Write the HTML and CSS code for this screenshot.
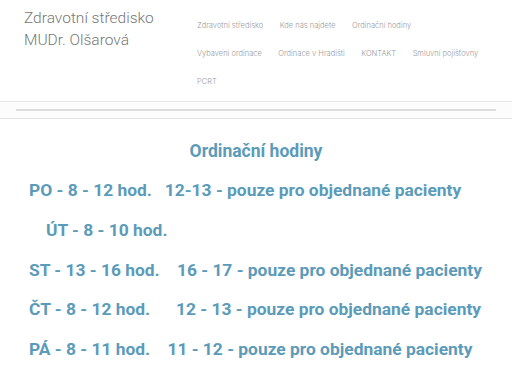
FILE: index.html
```html
<html>

<head>
	<title>Zdravotní středisko MUDr. Olšarová</title>
	<meta charset="utf-8">
	<meta name="viewport" content="width=device-width, initial-scale=1.0">

	<link rel="stylesheet" href="styles.css">
</head>

<body>
	<div class="header">
		<div class="logo">
			<p>Zdravotní středisko</p>
			<p>MUDr. Olšarová</p>
		</div>
		<ul class="menu">
			<li>Zdravotní středisko</li>
			<li>Kde nás najdete</li>
			<li>Ordinační hodiny</li>
			<li>Vybavení ordinace</li>
			<li>Ordinace v Hradišti</li>
			<li>KONTAKT</li>
			<li>Smluvní pojišťovny</li>
			<li>PCRT</li>
		</ul>
	</div>

	<div class="band">
		<div class="band-line"></div>
	</div>

	<div class="content">
		<h1>Ordinační hodiny</h1>
		<p>PO - 8 - 12 hod.&nbsp;&nbsp; 12-13 - pouze pro objednané pacienty</p>
		<p class="indent">ÚT - 8 - 10 hod.</p>
		<p>ST - 13 - 16 hod.&nbsp;&nbsp;&nbsp; 16 - 17 - pouze pro objednané pacienty</p>
		<p>ČT - 8 - 12 hod.&nbsp;&nbsp;&nbsp;&nbsp;&nbsp; 12 - 13 - pouze pro objednané pacienty</p>
		<p>PÁ - 8 - 11 hod.&nbsp;&nbsp;&nbsp; 11 - 12 - pouze pro objednané pacienty</p>
	</div>
</body>

</html>
```

FILE: styles.css
```css
body {
	margin: 0;
	background: #fff;
	font-family: Roboto, sans-serif;
}

.header {
	display: flex;
	height: 101px;
}

.logo {
	width: 173px;
	padding: 7px 0 0 24px;
	color: #777;
	font-size: 15.5px;
	font-weight: 300;
}

.logo p {
	margin: 0;
	line-height: 22px;
}

.menu {
	display: flex;
	flex-wrap: wrap;
	align-content: flex-start;
	list-style: none;
	margin: 0;
	padding: 12px 0 0 0;
	width: 290px;
	column-gap: 16.5px;
	font-family: Inter, sans-serif;
	font-size: 7.5px;
	font-weight: 300;
	color: #9a9a9a;
}

.menu li {
	line-height: 28px;
}

.band {
	height: 16px;
	border-top: 1px solid #e6e6e6;
	border-bottom: 1px solid #e6e6e6;
	background: #fcfcfc;
	padding: 0 16px;
	display: flex;
	align-items: center;
}

.band-line {
	flex: 1;
	height: 2px;
	background: #dedede;
}

.content {
	padding: 20px 0 0 29px;
	color: #5b9bb9;
	font-weight: 700;
}

.content h1 {
	margin: 0 0 8px -29px;
	text-align: center;
	font-size: 17.5px;
	line-height: 24px;
}

.content p {
	margin: 0;
	font-size: 17.4px;
	line-height: 39.8px;
}

.content .indent {
	padding-left: 17px;
}
```
